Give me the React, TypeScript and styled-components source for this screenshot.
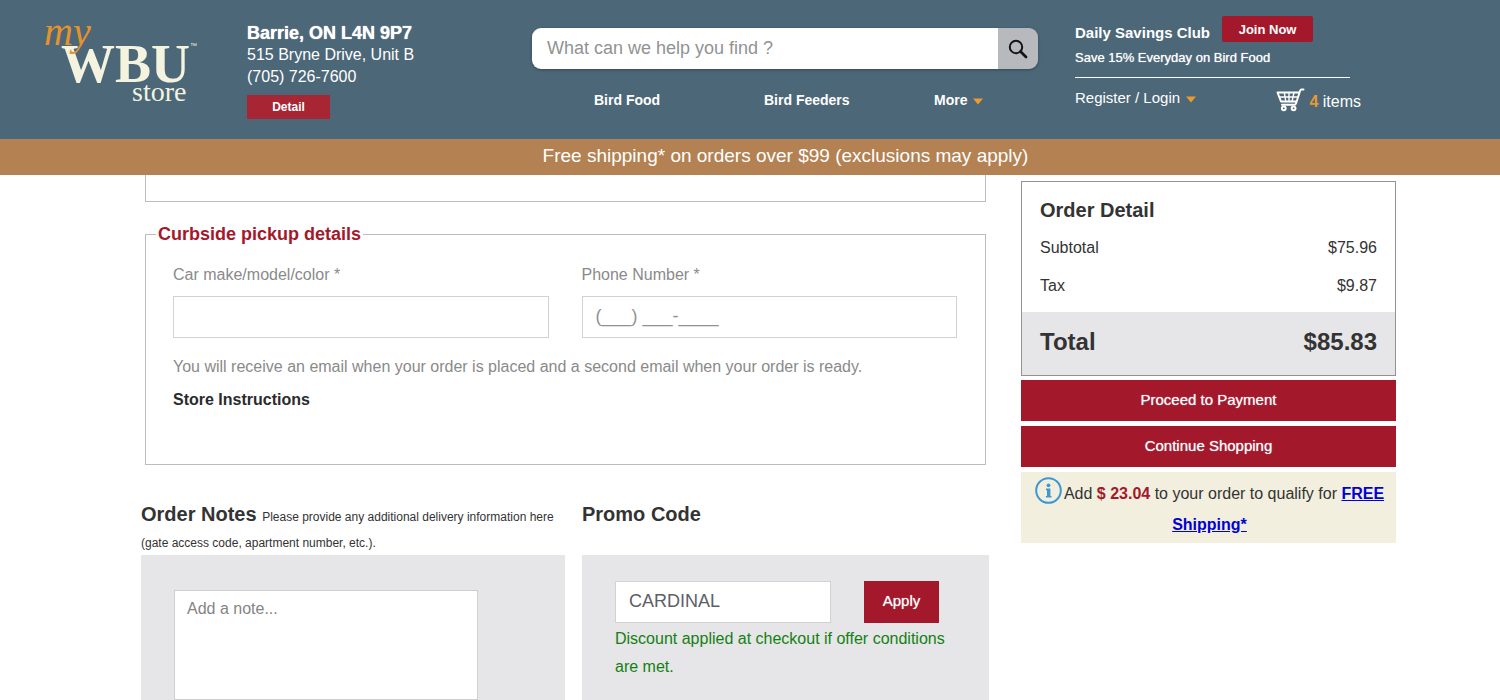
import React from 'react';
import styled, { createGlobalStyle } from 'styled-components';

const GlobalStyle = createGlobalStyle`
  *, *::before, *::after { box-sizing: border-box; }
  body {
    margin: 0;
    background: #fff;
    color: #333;
    font: 16px/20px "Liberation Sans", Arial, sans-serif;
  }
  h2, p, dl, dd, dt, address { margin: 0; font-style: normal; }
  button, input, textarea { font-family: inherit; border-radius: 0; }
  button { border: 0; cursor: pointer; }
`;

const red = '#a3182b';
const grey = '#e6e6e8';

const Header = styled.header`
  display: grid;
  grid-template-columns: 247fr 285fr 506fr 37fr 286fr 139fr;
  height: 139px;
  background: #4c6778;
  color: #fff;
`;

const LogoLink = styled.a`
  padding: 20px 0 0 40px;
  svg { display: block; overflow: visible; }
`;

const StoreInfo = styled.address`
  padding-top: 22px;
  line-height: 22px;
`;

const City = styled.strong`
  display: block;
  font-size: 18px;
  font-weight: 900;
  text-shadow: 0 0 1px #fff;
`;

const SolidButton = styled.button<{ $size: 'small' | 'join' | 'apply' | 'wide' }>`
  flex: none;
  background: ${red};
  color: #fff;
  text-shadow: 0 0 1px rgba(255, 255, 255, 0.7);
  white-space: nowrap;
  ${({ $size }) =>
    ({
      small: 'display: block; width: 83px; height: 24px; margin-top: 7px; padding: 0; background: #a82534; font-size: 12px; font-weight: 700; text-shadow: none;',
      join: 'width: 91px; height: 26px; padding: 0; border-radius: 2px; font-size: 13px; font-weight: 700; text-shadow: none;',
      apply: 'width: 75px; height: 42px; padding: 0 0 4px; font-size: 15px;',
      wide: 'width: 100%; height: 41px; padding: 0 0 3px; font-size: 15px;',
    })[$size]}
`;

const SearchArea = styled.div`
  padding-top: 28px;
`;

const SearchForm = styled.form`
  display: flex;
  height: 41px;
  border-radius: 9px;
  overflow: hidden;
  box-shadow: 0 1px 3px rgba(0, 0, 0, 0.3);
`;

const SearchInput = styled.input`
  flex: 1;
  min-width: 0;
  padding: 0 15px;
  border: 0;
  background: #fff;
  font-size: 18px;
  &::placeholder { color: #929292; opacity: 1; }
`;

const SearchButton = styled.button`
  display: grid;
  place-items: center;
  width: 40px;
  padding: 0;
  background: #b8b9bd;
`;

const Nav = styled.nav`
  display: grid;
  grid-template-columns: 170fr 170fr 104fr;
  padding: 21px 0 0 62px;
`;

const NavLink = styled.a`
  color: #fff;
  font-size: 14px;
  font-weight: 700;
  text-decoration: none;
`;

const Account = styled.div`
  grid-column: 5;
  padding-top: 16px;
`;

const ClubRow = styled.div`
  display: flex;
  gap: 12px;
  strong { padding-top: 7px; font-size: 15px; white-space: nowrap; }
`;

const ClubNote = styled.p`
  margin-right: 11px;
  padding: 5px 0 9px;
  border-bottom: 1px solid #fff;
  font-size: 13px;
  text-shadow: 0 0 1px rgba(255, 255, 255, 0.8);
`;

const AccountRow = styled.div`
  display: flex;
  justify-content: space-between;
  padding-top: 10px;
  white-space: nowrap;
`;

const AccountLink = styled.a`
  color: #fff;
  font-size: 15px;
  text-decoration: none;
`;

const CartLink = styled.a`
  display: flex;
  gap: 4px;
  color: #fff;
  text-decoration: none;
  span { padding-top: 4px; }
  b { color: #e59a33; }
`;

const Banner = styled.p`
  padding: 0 0 2px 71px;
  background: #b48152;
  color: #fff;
  font-size: 19px;
  line-height: 34px;
  text-align: center;
`;

const Main = styled.main`
  display: grid;
  grid-template-columns: minmax(0, 848fr) minmax(0, 375fr);
  gap: 32px;
  padding: 0 104px 0 141px;
`;

const PreviousBox = styled.div`
  height: 27px;
  margin: 0 3px 22px 4px;
  border: 1px solid #bcbcbc;
  border-top: 0;
`;

const Fieldset = styled.fieldset`
  min-width: 0;
  margin: 0 3px 0 4px;
  padding: 0 28px 54px 27px;
  border: 1px solid #bcbcbc;
`;

const Legend = styled.legend`
  margin-left: -17px;
  padding: 0 2px;
  color: ${red};
  font-size: 18px;
  font-weight: 700;
`;

const Fields = styled.div`
  display: grid;
  grid-template-columns: 1fr 1fr;
  gap: 33px;
  padding: 20px 0 19px;
`;

const Label = styled.label`
  display: block;
  margin-bottom: 10px;
  color: #8a8a8a;
  line-height: 22px;
`;

const TextInput = styled.input`
  display: block;
  width: 100%;
  min-width: 0;
  height: 42px;
  padding: 0 13px 2px;
  border: 1px solid #d2d2d2;
  background: #fff;
  color: #5c6066;
  font-size: 18px;
  &::placeholder { color: #929292; opacity: 1; }
`;

const PickupNote = styled.p`
  margin-bottom: 13px;
  color: #8a8a8a;
`;

const StoreInstructions = styled.strong`
  display: block;
  color: #2b2b2b;
`;

const Extras = styled.div`
  display: grid;
  grid-template-columns: minmax(0, 424fr) minmax(0, 407fr);
  column-gap: 17px;
  margin-top: 36px;
`;

const ExtraSection = styled.section`
  display: flex;
  flex-direction: column;
`;

const ExtraTitle = styled.h2`
  min-height: 54px;
  font-size: 20px;
  line-height: 26px;
  small { font-size: 12px; font-weight: 400; line-height: 12px; }
`;

const Panel = styled.div<{ $top: number }>`
  flex: 1;
  padding: ${({ $top }) => $top}px 33px 0;
  background: ${grey};
`;

const NoteInput = styled.textarea`
  display: block;
  width: 85%;
  height: 110px;
  padding: 8px 12px;
  border: 1px solid #cfcfcf;
  background: #fff;
  font-size: 16px;
  line-height: 20px;
  resize: none;
  &::placeholder { color: #848484; opacity: 1; }
`;

const PromoForm = styled.form`
  display: flex;
  gap: 33px;
  padding-right: 17px;
`;

const PromoMessage = styled.p`
  padding-top: 2px;
  color: #138013;
  line-height: 28px;
`;

const Aside = styled.aside`
  display: flex;
  flex-direction: column;
  gap: 5px;
  padding-top: 6px;
`;

const OrderCard = styled.section`
  margin-bottom: -1px;
  padding-top: 9px;
  border: 1px solid #929292;
  line-height: 38px;
  h2 { padding: 0 18px; font-size: 20px; line-height: 38px; }
`;

const OrderRow = styled.div<{ $total?: boolean }>`
  display: flex;
  justify-content: space-between;
  padding: 0 18px;
  ${({ $total }) =>
    $total &&
    `
    margin-top: 7px;
    padding-bottom: 3px;
    background: ${grey};
    font-size: 24px;
    font-weight: 700;
    line-height: 60px;
  `}
`;

const ShippingNotice = styled.p`
  padding: 5px 6px 3px 8px;
  background: #f2efde;
  line-height: 31px;
  text-align: center;
  b { color: ${red}; line-height: 20px; }
  a { color: #0000d8; font-weight: 700; line-height: 20px; }
  svg { margin-right: 2px; vertical-align: -5px; }
`;

const CaretIcon = styled.svg`
  margin-left: 6px;
`;

const Caret = () => (
  <CaretIcon width="10" height="7" viewBox="0 0 10 7" aria-hidden="true">
    <path d="M0 0.5h10L5 6.5z" fill="#ee9a2c" />
  </CaretIcon>
);

const Logo = () => (
  <svg width="165" height="90" viewBox="0 0 165 90" role="img" aria-label="my WBU store">
    <g fontFamily="'Liberation Serif', serif" fill="#f3f3df">
      <text x="21" y="62" fontSize="54" fontWeight="700">WBU</text>
      <text x="92" y="81" fontSize="28">store</text>
      <text x="150" y="28" fontSize="7" fontFamily="'Liberation Sans', sans-serif">™</text>
      <text x="4" y="25" fontSize="40" fontStyle="italic" fill="#e5922c">my</text>
    </g>
  </svg>
);

const SearchIcon = () => (
  <svg width="20" height="20" viewBox="0 0 20 20" fill="none" stroke="#151515" aria-hidden="true">
    <circle cx="8" cy="8" r="6.2" strokeWidth="2" />
    <path d="M12.5 12.5l5.5 5.5" strokeWidth="2.8" strokeLinecap="round" />
  </svg>
);

const CartIcon = () => (
  <svg width="29" height="24" viewBox="0 0 29 24" fill="none" stroke="#fff" strokeWidth="2" strokeLinejoin="round" strokeLinecap="round" aria-hidden="true">
    <path d="M27.5 1.5h-2q-1 0-1.4 1.2L20 15.5q-.4 1.3-1.8 1.3H6" />
    <path d="M23 4.5H1.5l3.5 9h15" />
    <path d="M3.5 9h18M8.3 4.5l1.5 9M13 4.5v9M18 4.5l-2 9" strokeWidth="1.4" />
    <circle cx="7.8" cy="20.3" r="1.9" />
    <circle cx="17.6" cy="20.3" r="1.9" />
  </svg>
);

const InfoIcon = () => (
  <svg width="27" height="27" viewBox="0 0 27 27" aria-hidden="true">
    <circle cx="13.5" cy="13.5" r="12.3" fill="none" stroke="#3d97d3" strokeWidth="2" />
    <circle cx="13.5" cy="8.3" r="1.9" fill="#3d97d3" />
    <path d="M11 11.6h4.4v7.4h1.1v1.6h-5.6v-1.6H12v-5.8h-1z" fill="#3d97d3" />
  </svg>
);

export default function App() {
  return (
    <>
      <GlobalStyle />
      <Header>
        <LogoLink href="#home">
          <Logo />
        </LogoLink>
        <StoreInfo>
          <City>Barrie, ON L4N 9P7</City>
          515 Bryne Drive, Unit B
          <br />
          (705) 726-7600
          <SolidButton $size="small">Detail</SolidButton>
        </StoreInfo>
        <SearchArea>
          <SearchForm role="search">
            <SearchInput type="text" placeholder="What can we help you find ?" aria-label="Search" />
            <SearchButton type="button" aria-label="Search">
              <SearchIcon />
            </SearchButton>
          </SearchForm>
          <Nav>
            <NavLink href="#food">Bird Food</NavLink>
            <NavLink href="#feeders">Bird Feeders</NavLink>
            <NavLink href="#more">
              More
              <Caret />
            </NavLink>
          </Nav>
        </SearchArea>
        <Account>
          <ClubRow>
            <strong>Daily Savings Club</strong>
            <SolidButton $size="join">Join Now</SolidButton>
          </ClubRow>
          <ClubNote>Save 15% Everyday on Bird Food</ClubNote>
          <AccountRow>
            <AccountLink href="#login">
              Register / Login
              <Caret />
            </AccountLink>
            <CartLink href="#cart">
              <CartIcon />
              <span>
                <b>4</b> items
              </span>
            </CartLink>
          </AccountRow>
        </Account>
      </Header>
      <Banner>Free shipping* on orders over $99 (exclusions may apply)</Banner>
      <Main>
        <div>
          <PreviousBox />
          <Fieldset>
            <Legend>Curbside pickup details</Legend>
            <Fields>
              <div>
                <Label htmlFor="car">Car make/model/color *</Label>
                <TextInput id="car" type="text" />
              </div>
              <div>
                <Label htmlFor="phone">Phone Number *</Label>
                <TextInput id="phone" type="tel" placeholder="(___) ___-____" />
              </div>
            </Fields>
            <PickupNote>
              You will receive an email when your order is placed and a second email when your order is ready.
            </PickupNote>
            <StoreInstructions>Store Instructions</StoreInstructions>
          </Fieldset>
          <Extras>
            <ExtraSection>
              <ExtraTitle>
                Order Notes{' '}
                <small>
                  Please provide any additional delivery information here (gate access code, apartment number, etc.).
                </small>
              </ExtraTitle>
              <Panel $top={35}>
                <NoteInput placeholder="Add a note..." aria-label="Order notes" />
              </Panel>
            </ExtraSection>
            <ExtraSection>
              <ExtraTitle>Promo Code</ExtraTitle>
              <Panel $top={26}>
                <PromoForm>
                  <TextInput type="text" defaultValue="CARDINAL" aria-label="Promo code" />
                  <SolidButton type="button" $size="apply">Apply</SolidButton>
                </PromoForm>
                <PromoMessage>Discount applied at checkout if offer conditions are met.</PromoMessage>
              </Panel>
            </ExtraSection>
          </Extras>
        </div>
        <Aside>
          <OrderCard>
            <h2>Order Detail</h2>
            <dl>
              <OrderRow>
                <dt>Subtotal</dt>
                <dd>$75.96</dd>
              </OrderRow>
              <OrderRow>
                <dt>Tax</dt>
                <dd>$9.87</dd>
              </OrderRow>
              <OrderRow $total>
                <dt>Total</dt>
                <dd>$85.83</dd>
              </OrderRow>
            </dl>
          </OrderCard>
          <SolidButton $size="wide">Proceed to Payment</SolidButton>
          <SolidButton $size="wide">Continue Shopping</SolidButton>
          <ShippingNotice>
            <InfoIcon />
            Add <b>$ 23.04</b> to your order to qualify for <a href="#shipping">FREE Shipping*</a>
          </ShippingNotice>
        </Aside>
      </Main>
    </>
  );
}
